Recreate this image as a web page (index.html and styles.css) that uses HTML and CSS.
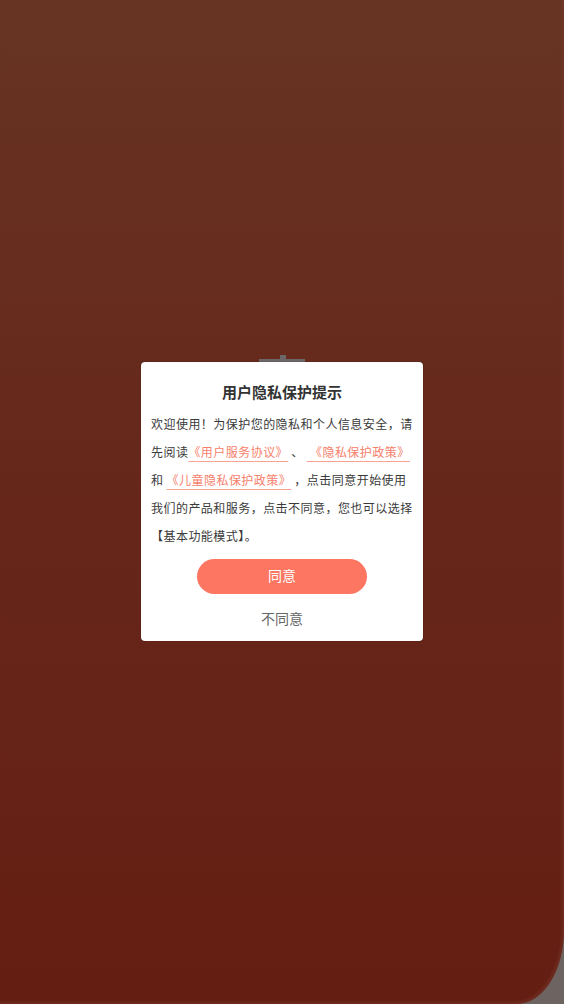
FILE: index.html
```html
<!DOCTYPE html>
<html lang="zh-CN">
<head>
<meta charset="utf-8">
<title>用户隐私保护提示</title>
<link rel="stylesheet" href="styles.css">
</head>
<body>
<div class="screen">
  <div class="page">
    <div class="tab"><span class="tab-knob"></span></div>
    <div class="modal">
      <h1 class="title">用户隐私保护提示</h1>
      <p class="content">欢迎使用！为保护您的隐私和个人信息安全，请先阅读<a class="link">《用户服务协议》</a> 、 <a class="link"> 《隐私保护政策》</a>和 <a class="link">《儿童隐私保护政策》</a> ，点击同意开始使用我们的产品和服务，点击不同意，您也可以选择【基本功能模式】。</p>
      <button class="agree">同意</button>
      <div class="disagree">不同意</div>
    </div>
  </div>
</div>
</body>
</html>
```

FILE: styles.css
```css
html, body {
  margin: 0;
  padding: 0;
}
body {
  font-family: "Noto Sans CJK SC", "Noto Sans", sans-serif;
}
.screen {
  width: 564px;
  height: 1004px;
  background: #6d6461;
  overflow: hidden;
}
.page {
  position: relative;
  height: 1004px;
  background: linear-gradient(180deg, #673423 0%, #66271a 50%, #651e12 100%);
  border-bottom-right-radius: 47px 74px;
  box-shadow: inset -2px -2px 3px rgba(120, 60, 50, 0.5);
  display: flex;
  justify-content: center;
  padding-top: 362px;
  box-sizing: border-box;
}
.tab {
  position: absolute;
  left: 259px;
  top: 359px;
  width: 46px;
  height: 4px;
  background: #6c6867;
}
.tab-knob {
  position: absolute;
  left: 21px;
  top: -4px;
  width: 6px;
  height: 4px;
  background: #6c6867;
}
.modal {
  position: relative;
  width: 282px;
  height: 279px;
  background: #ffffff;
  border-radius: 4px;
  box-shadow: 0 0 1px rgba(0, 0, 0, 0.8);
  box-sizing: border-box;
  padding: 20px 8px 13px 10px;
  display: flex;
  flex-direction: column;
  align-items: flex-start;
}
.title {
  align-self: center;
  margin: 0 0 0 -2px;
  font-size: 15px;
  line-height: 20px;
  font-weight: bold;
  color: #333333;
}
.content {
  margin: 8px 0 0;
  width: 264px;
  font-size: 12px;
  letter-spacing: 0.46px;
  line-height: 28px;
  color: #3a3a3a;
  text-align: left;
}
.link {
  color: #f7806b;
  text-decoration: underline;
  text-decoration-color: #f9a293;
  text-underline-offset: 4px;
  white-space: pre;
}
.agree {
  align-self: center;
  margin: 9px 0 0 -2px;
  width: 170px;
  height: 35px;
  border: none;
  border-radius: 18px;
  background: #fc7662;
  color: #ffffff;
  font-family: "Noto Sans CJK SC", "Noto Sans", sans-serif;
  font-size: 14px;
  line-height: 33px;
  padding: 0 0 2px;
}
.disagree {
  align-self: center;
  margin: 14px 0 0 -2px;
  font-size: 14px;
  line-height: 20px;
  color: #666666;
}
```
